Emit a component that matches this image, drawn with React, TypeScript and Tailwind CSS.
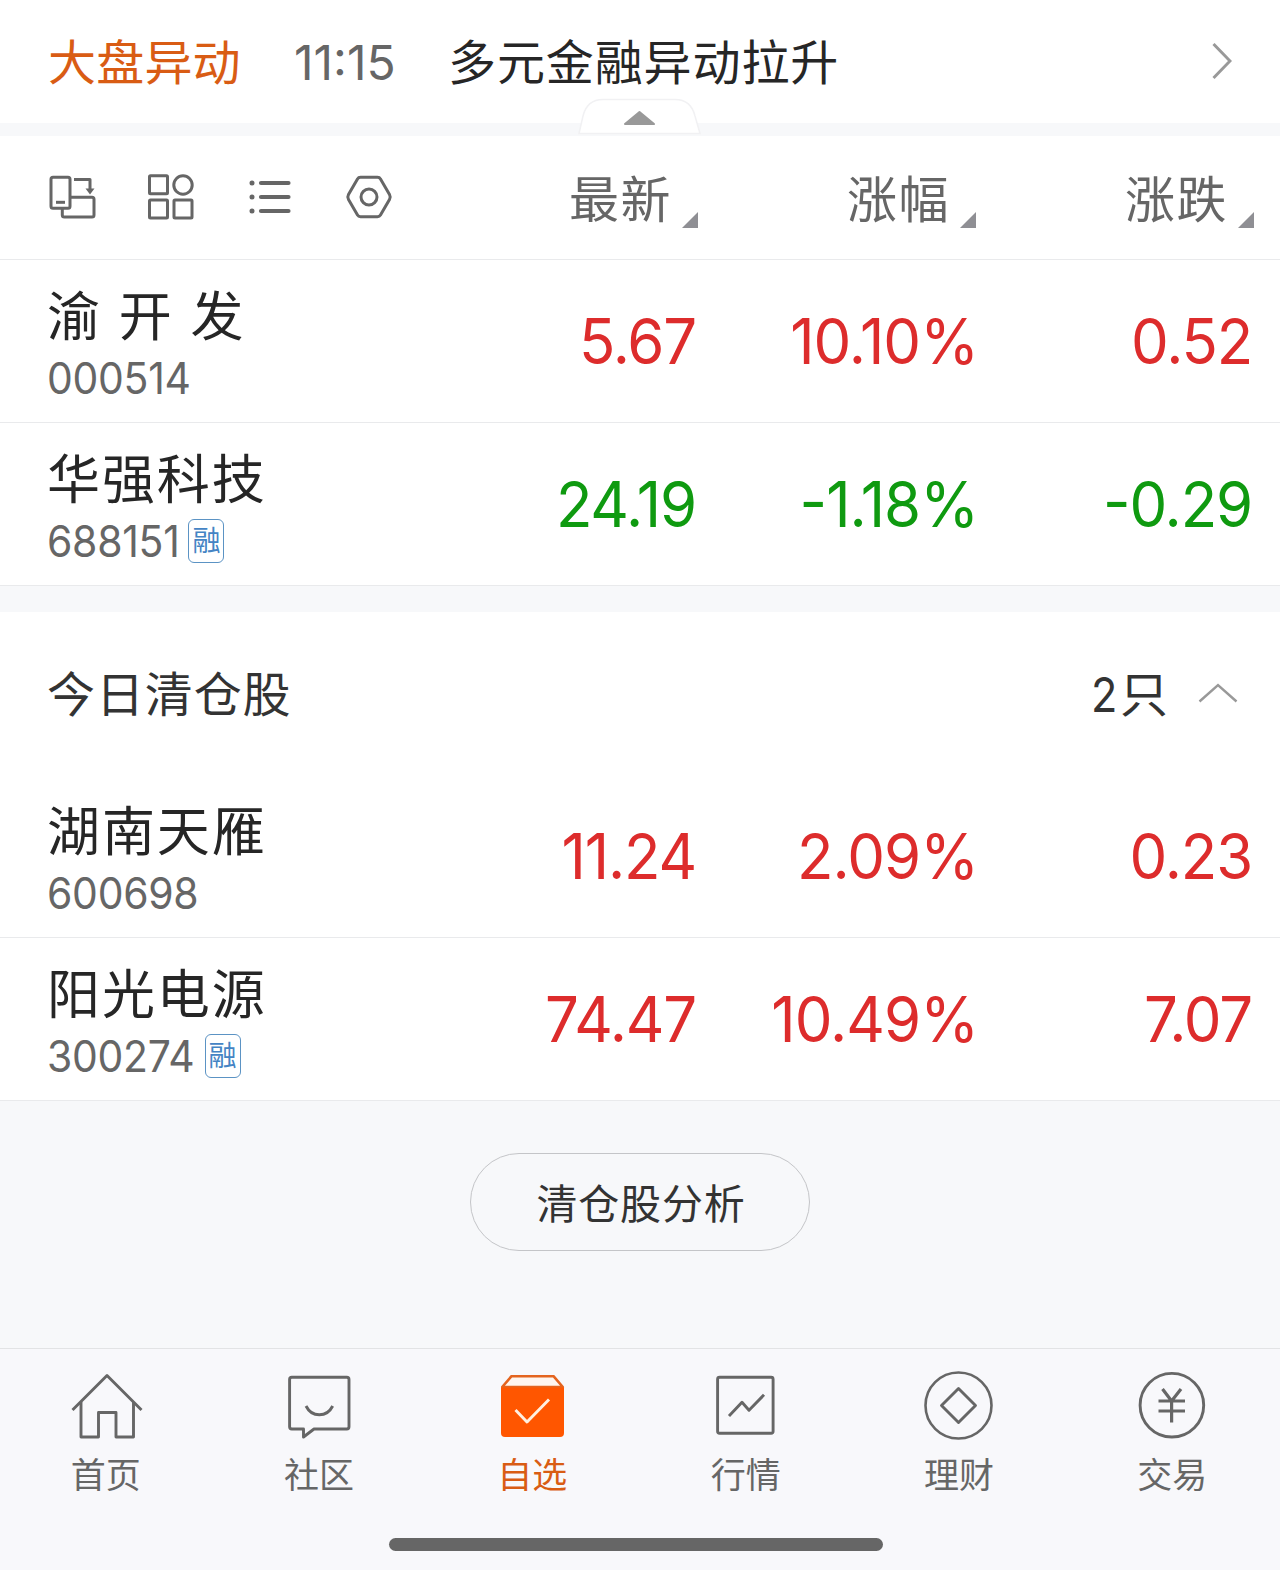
import type { ReactNode } from 'react';
import clsx from 'clsx';

type Stock = {
  name: string;
  code: string;
  margin?: boolean;
  price: string;
  percent: string;
  change: string;
};

const watchlist: Stock[] = [
  { name: '渝 开 发', code: '000514', price: '5.67', percent: '10.10%', change: '0.52' },
  { name: '华强科技', code: '688151', margin: true, price: '24.19', percent: '-1.18%', change: '-0.29' },
];

const closedToday: Stock[] = [
  { name: '湖南天雁', code: '600698', price: '11.24', percent: '2.09%', change: '0.23' },
  { name: '阳光电源', code: '300274', margin: true, price: '74.47', percent: '10.49%', change: '7.07' },
];

const columns = ['最新', '涨幅', '涨跌'];

function ToolIcon({ children }: { children: ReactNode }) {
  return (
    <svg width="48" height="48" viewBox="0 0 48 48" fill="none" stroke="#666" strokeWidth="3" strokeLinejoin="round">
      {children}
    </svg>
  );
}

function TabIcon({ children }: { children: ReactNode }) {
  return (
    <svg width="80" height="80" viewBox="0 0 80 80" fill="none" stroke="#666" strokeWidth="2.9" strokeLinejoin="round">
      {children}
    </svg>
  );
}

const tabs = [
  {
    label: '首页',
    icon: (
      <TabIcon>
        <path d="M5.5 44 40 9.5l34.5 34.5" />
        <path d="M14 36v35h17.500V46.500H49V71h17.500V36" />
      </TabIcon>
    ),
  },
  {
    label: '社区',
    icon: (
      <TabIcon>
        <path d="M11.800 11.300h55a2.200 2.200 0 0 1 2.200 2.200v47.300a2.200 2.200 0 0 1-2.200 2.200H34l-10.500 8V63H11.800a2.200 2.200 0 0 1-2.200-2.200V13.500a2.200 2.200 0 0 1 2.200-2.200Z" />
        <path d="M26 40c3 6 8 8.800 13.300 8.800S49.700 46 52.700 40" />
      </TabIcon>
    ),
  },
  {
    label: '自选',
    active: true,
    icon: (
      <TabIcon>
        <path d="M9.200 21 18.500 10.200h42L69.800 21Z" fill="#fff6ef" stroke="#e4641f" strokeWidth="2.600" />
        <path d="M8 21.500h63V67a4 4 0 0 1-4 4H12a4 4 0 0 1-4-4Z" fill="#ff5600" stroke="none" />
        <path d="M22.500 44 34 56l22-22.500" stroke="#fff0e0" />
      </TabIcon>
    ),
  },
  {
    label: '行情',
    icon: (
      <TabIcon>
        <rect x="10.600" y="11.200" width="55.500" height="56" rx="2" />
        <path d="m22 50 13-13.700 7 8 15-15.500" />
      </TabIcon>
    ),
  },
  {
    label: '理财',
    icon: (
      <TabIcon>
        <circle cx="38.500" cy="39.500" r="33" strokeWidth="2.600" />
        <path d="M38.500 22.500 55.500 39.500 38.500 56.500 21.500 39.500Z" />
      </TabIcon>
    ),
  },
  {
    label: '交易',
    icon: (
      <TabIcon>
        <circle cx="38.900" cy="39.200" r="31.800" />
        <path d="M29.500 23 38.600 35 48 23M38.600 35v21.500M25.500 35h26.500M25.500 45h26.500" strokeWidth="3.200" />
      </TabIcon>
    ),
  },
];

function Quote({ value, down, className }: { value: string; down: boolean; className?: string }) {
  return (
    <div
      className={clsx(
        "origin-right scale-x-95 text-right text-[63px] leading-[163px] whitespace-nowrap [font-feature-settings:'case']",
        down ? 'text-[#0f9a10]' : 'text-[#dd2c2c]',
        className,
      )}
    >
      {value}
    </div>
  );
}

function StockRow({ stock }: { stock: Stock }) {
  const down = stock.change.startsWith('-');
  return (
    <div className="grid h-[163px] shrink-0 grid-cols-[398px_251px_282px_274px] border-b border-[#e9eaec] bg-white pl-[47px]">
      <div className="pt-[25px]">
        <div className="h-[61px] text-[53px] leading-[64px] tracking-[1.9px] whitespace-pre text-[#262626]">{stock.name}</div>
        <div className="flex h-16 items-center text-[44px] leading-[65px] text-[#666]">
          <span className="-mr-[11px] origin-left scale-x-[0.93] tracking-[-0.3px]">{stock.code}</span>
          {stock.margin && (
            <span className="ml-[10px] flex h-11 w-9 items-center justify-center rounded-md border border-[#5b93c4] text-[28px] leading-none text-[#4484c4]">
              融
            </span>
          )}
        </div>
      </div>
      <Quote value={stock.price} down={down} className="tracking-[-1.2px]" />
      <Quote value={stock.percent} down={down} className="tracking-[-1px]" />
      <Quote value={stock.change} down={down} className="tracking-[-1.2px]" />
    </div>
  );
}

export default function App() {
  return (
    <div className="flex h-[1570px] w-[1280px] flex-col overflow-hidden bg-[#f7f8fa] font-['Inter','Noto_Sans_CJK_SC',sans-serif]">
      {/* Market alert */}
      <div className="relative h-[123px] shrink-0 bg-white">
        <div className="flex h-[122px] items-center pr-12 pl-[48px] text-[48px] tracking-[0.9px]">
          <span className="w-[246px] pt-[3px] tracking-[0.2px] text-[#d95c14]">大盘异动</span>
          <span className="w-[154px] pt-[3px] tracking-[0px] text-[#666]">11:15</span>
          <span className="flex-1 pt-[3px] text-[#262626]">多元金融异动拉升</span>
          <svg width="20" height="38" viewBox="0 0 20 38" fill="none" stroke="#999" strokeWidth="3">
            <path d="M1.500 2 18 19 1.500 36" />
          </svg>
        </div>
        <svg className="absolute top-[98px] left-[578px]" width="124" height="38" viewBox="0 0 124 38">
          <path d="M1 35.500 5 18Q9 1.500 25 1.500H97Q113 1.500 117 18L122 35.500Z" fill="#fff" stroke="#f1f1f3" strokeWidth="1.500" />
          <path d="M61.500 14 76 26H47Z" fill="#999" stroke="#999" strokeWidth="2" strokeLinejoin="round" />
        </svg>
      </div>

      {/* Toolbar and column heads */}
      <div className="mt-[13px] flex h-[124px] shrink-0 items-center border-b border-[#e9eaec] bg-white pb-0.5 pl-12">
        <div className="flex w-[372px] gap-[51px]">
          <ToolIcon>
            <rect x="3" y="4.300" width="19" height="31" rx="2" />
            <path d="M8 29.300h9" />
            <path d="M22 24.300h22a2 2 0 0 1 2 2v15.700a2 2 0 0 1-2 2H16.300a2 2 0 0 1-2-2V36" />
            <path d="M26 6.500h16V17" />
            <path d="M37.500 15.500h9L42 21.500Z" fill="#666" stroke="none" />
          </ToolIcon>
          <ToolIcon>
            <rect x="2.500" y="2.800" width="18" height="18" rx="1" />
            <circle cx="36" cy="12" r="9.200" />
            <rect x="2.500" y="27" width="18" height="18" rx="1" />
            <rect x="27" y="27" width="18" height="18" rx="1" />
          </ToolIcon>
          <ToolIcon>
            <path d="M15 10h27.500M15 24h27.500M15 38h27.500" strokeWidth="4.200" strokeLinecap="round" />
            <path d="M6 10h.01M6 24h.01M6 38h.01" strokeWidth="5" strokeLinecap="round" />
          </ToolIcon>
          <ToolIcon>
            <path d="M15.500 4.300h17q2 0 3 1.700l9 15.500q1.400 2.500 0 5l-9 15.500q-1 1.700-3 1.700h-17q-2 0-3-1.700l-9-15.500q-1.400-2.500 0-5l9-15.500q1-1.700 3-1.700Z" />
            <circle cx="24" cy="24" r="8" />
          </ToolIcon>
        </div>
        <div className="grid grid-cols-[278px_278px_278px]">
          {columns.map((label) => (
            <div key={label} className="flex h-[62px] items-end justify-end gap-[10px]">
              <span className="-mb-[3px] text-[50px] leading-[62px] tracking-[1.5px] text-[#666]">{label}</span>
              <svg width="16" height="16" viewBox="0 0 16 16">
                <path d="M16 0v16H0Z" fill="#8f8f94" />
              </svg>
            </div>
          ))}
        </div>
      </div>

      {watchlist.map((stock) => (
        <StockRow key={stock.code} stock={stock} />
      ))}

      {/* Positions closed today */}
      <div className="mt-[26px] flex h-[163px] shrink-0 items-center bg-white pr-[42px] pl-[47px] text-[48px] tracking-[0.9px] text-[#333]">
        <span className="flex-1 pt-[3px]">今日清仓股</span>
        <span className="mr-[29px] flex items-center gap-0.5 pt-0.5">
          <span className="origin-right scale-x-[0.9]">2</span>只
        </span>
        <svg className="-mt-0.5" width="40" height="20" viewBox="0 0 40 20" fill="none" stroke="#999" strokeWidth="2.4">
          <path d="M1.500 18.500 20 2l18.500 16.500" />
        </svg>
      </div>
      {closedToday.map((stock) => (
        <StockRow key={stock.code} stock={stock} />
      ))}

      <div className="flex h-[247px] shrink-0 justify-center pt-[52px]">
        <button className="h-[98px] w-[340px] rounded-full border border-[#c4c5c8] pt-[5px] pl-0.5 text-[41px] leading-[91px] tracking-[0.8px] text-[#333]">
          清仓股分析
        </button>
      </div>

      {/* Bottom navigation */}
      <nav className="grid h-[190px] shrink-0 grid-cols-6 border-t border-[#e2e3e5] bg-[#f8f8fb] pt-[17px]">
        {tabs.map((tab) => (
          <div key={tab.label} className="flex flex-col items-center">
            {tab.icon}
            <span
              className={clsx('mr-0.5 pt-px text-[35px] leading-[56px]', tab.active ? 'text-[#d95c14]' : 'text-[#666]')}
            >
              {tab.label}
            </span>
          </div>
        ))}
      </nav>
      <div className="flex flex-1 items-start bg-[#f8f8fb]">
        <div className="ml-[389px] h-[13px] w-[494px] rounded-full bg-[#666]" />
      </div>
    </div>
  );
}
